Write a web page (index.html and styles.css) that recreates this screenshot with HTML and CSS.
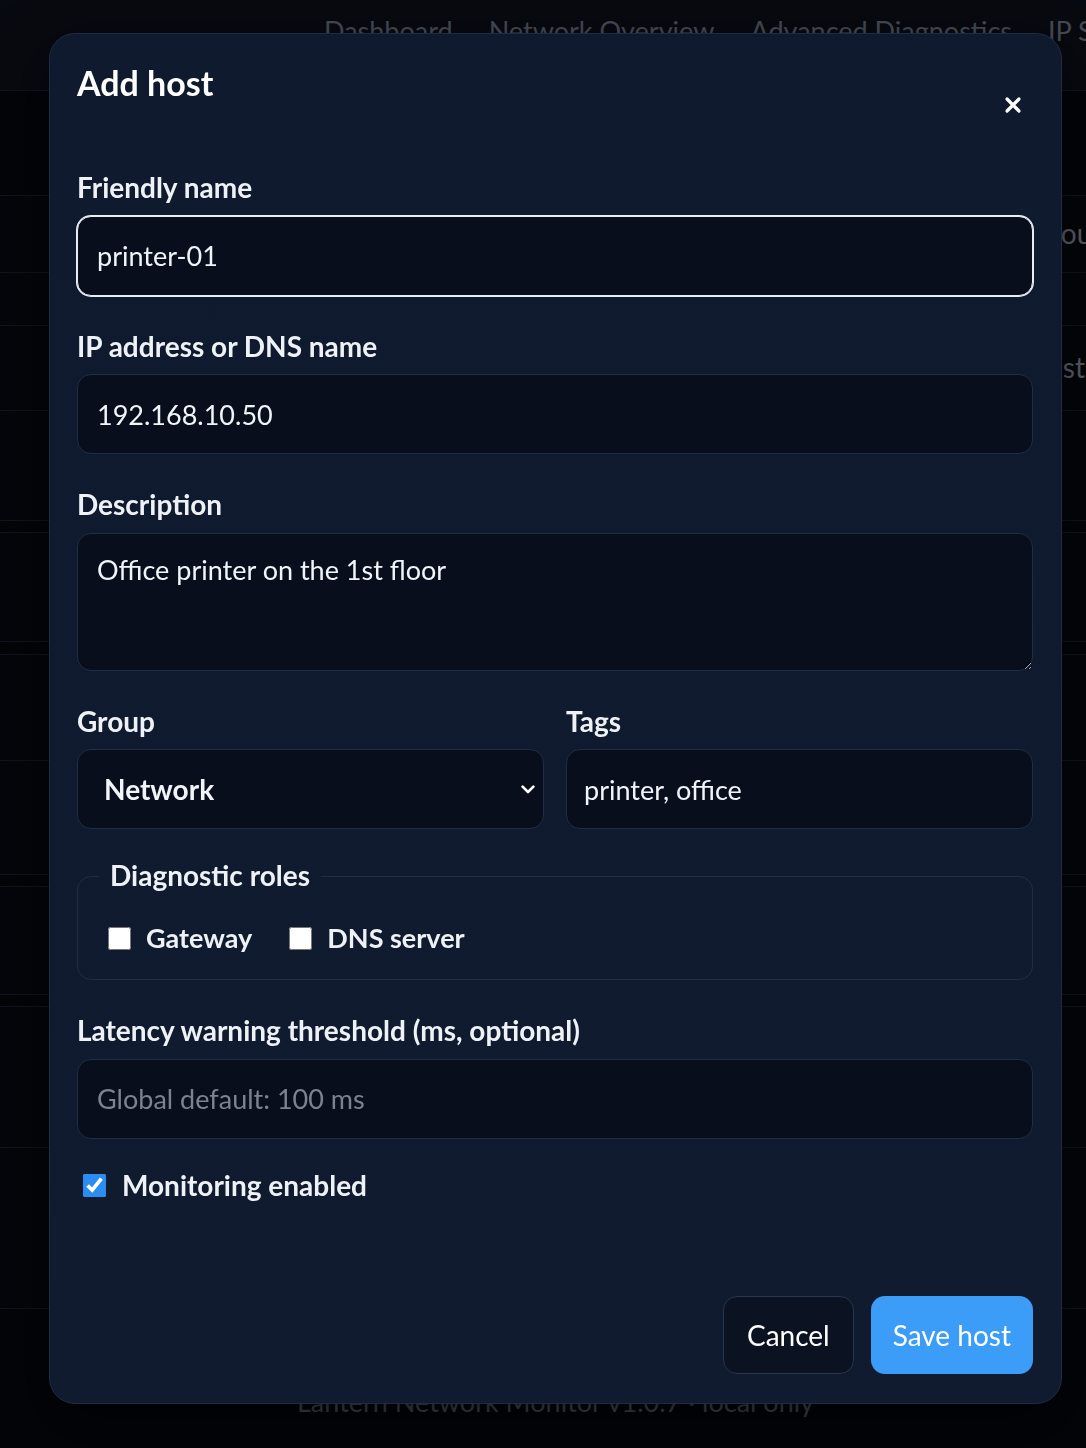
FILE: index.html
```html
<!DOCTYPE html>
<html lang="en">
<head>
<meta charset="utf-8">
<title>Add host</title>
<link rel="stylesheet" href="styles.css">
</head>
<body>
<div class="page">
  <header class="topbar">
    <nav class="nav">
      <a class="nav-link">Dashboard</a>
      <a class="nav-link">Network Overview</a>
      <a class="nav-link">Advanced Diagnostics</a>
      <a class="nav-link">IP Scanner</a>
    </nav>
  </header>
  <main class="bg-main">
    <section class="bg-card">
      <div class="bg-row bg-row--a"><span class="bg-text bg-text--groups">Groups</span></div>
      <div class="bg-row bg-row--b"></div>
      <div class="bg-row bg-row--c"><span class="bg-text bg-text--hosts">Hosts</span></div>
      <div class="bg-row bg-row--d bg-row--last"></div>
    </section>
    <section class="bg-card">
      <div class="bg-row bg-row--e bg-row--last"></div>
    </section>
    <section class="bg-card bg-card--tight">
      <div class="bg-row bg-row--f"></div>
      <div class="bg-row bg-row--g bg-row--last"></div>
    </section>
    <section class="bg-card">
      <div class="bg-row bg-row--h bg-row--last"></div>
    </section>
    <section class="bg-card">
      <div class="bg-row bg-row--i"></div>
      <div class="bg-row bg-row--j bg-row--last"></div>
    </section>
  </main>
  <footer class="bg-foot">Lantern Network Monitor v1.0.7 · local only</footer>
</div>

<div class="backdrop">
  <div class="modal" role="dialog" aria-labelledby="modal-title">
    <div class="modal-head">
      <h2 class="modal-title" id="modal-title">Add host</h2>
      <button class="close-btn" type="button" aria-label="Close">
        <svg class="close-icon" width="18" height="18" viewBox="0 0 18 18" aria-hidden="true">
          <path d="M3 3 L15 15 M15 3 L3 15" fill="none" stroke="#ffffff" stroke-width="3.2" stroke-linecap="round"/>
        </svg>
      </button>
    </div>

    <form class="form">
      <div class="field">
        <label class="label" for="f-name">Friendly name</label>
        <input class="control control--focus" id="f-name" type="text" value="printer-01">
      </div>
      <div class="field">
        <label class="label" for="f-ip">IP address or DNS name</label>
        <input class="control" id="f-ip" type="text" value="192.168.10.50">
      </div>
      <div class="field">
        <label class="label" for="f-desc">Description</label>
        <textarea class="control control--area" id="f-desc">Office printer on the 1st floor</textarea>
      </div>
      <div class="field-row">
        <div class="field">
          <label class="label" for="f-group">Group</label>
          <div class="select-wrap">
            <select class="control control--select" id="f-group">
              <option>Network</option>
              <option>Servers</option>
              <option>Workstations</option>
            </select>
            <svg class="select-chevron" width="14" height="9" viewBox="0 0 14 9" aria-hidden="true">
              <path d="M1.6 1.6 L7 7 L12.4 1.6" fill="none" stroke="#ffffff" stroke-width="2.6" stroke-linecap="round" stroke-linejoin="round"/>
            </svg>
          </div>
        </div>
        <div class="field">
          <label class="label" for="f-tags">Tags</label>
          <input class="control control--tags" id="f-tags" type="text" value="printer, office">
        </div>
      </div>
      <fieldset class="roles">
        <legend class="roles-legend">Diagnostic roles</legend>
        <div class="checks">
          <label class="check"><input class="check-box" type="checkbox"><span>Gateway</span></label>
          <label class="check"><input class="check-box" type="checkbox"><span>DNS server</span></label>
        </div>
      </fieldset>
      <div class="field">
        <label class="label" for="f-lat">Latency warning threshold (ms, optional)</label>
        <input class="control" id="f-lat" type="text" placeholder="Global default: 100 ms">
      </div>
      <label class="check check--main"><input class="check-box" type="checkbox" checked><span>Monitoring enabled</span></label>
    </form>

    <div class="modal-foot">
      <button class="btn btn--ghost" type="button">Cancel</button>
      <button class="btn btn--primary" type="button">Save host</button>
    </div>
  </div>
</div>
</body>
</html>
```

FILE: styles.css
```css
* { box-sizing: border-box; }

html, body {
  margin: 0;
  padding: 0;
  height: 1448px;
  overflow: hidden;
  background: #04060a;
  font-family: "Lato", "Noto Sans", sans-serif;
  color: #eef2f7;
}

/* ---------- background page ---------- */
.page {
  width: 1086px;
  height: 1448px;
  overflow: hidden;
  position: relative;
}

.topbar {
  height: 91px;
  background: #0a0d14;
  border-bottom: 1px solid #161b24;
  padding: 15px 0 0 324px;
}

.nav {
  display: flex;
  gap: 36px;
  white-space: nowrap;
}

.nav-link {
  font-size: 27px;
  line-height: 1.2;
  color: #5e6470;
}

.bg-main {
  padding-top: 104px;
  display: flex;
  flex-direction: column;
  gap: 11px;
}

.bg-card {
  background: #06080d;
  border-top: 1px solid #171c26;
  border-bottom: 1px solid #171c26;
  display: flex;
  flex-direction: column;
}

.bg-card--tight { margin-top: 1px; }

.bg-row {
  border-bottom: 1px solid #171c26;
  display: flex;
  align-items: center;
}

.bg-row--last { border-bottom: none; }
.bg-row--a { height: 77px; }
.bg-row--b { height: 53px; }
.bg-row--c { height: 85px; }
.bg-row--d { height: 109px; }
.bg-row--e { height: 108px; }
.bg-row--f { height: 106px; }
.bg-row--g { height: 113px; }
.bg-row--h { height: 107px; }
.bg-row--i { height: 141px; }
.bg-row--j { height: 160px; }

.bg-text {
  font-size: 28px;
  line-height: 1.2;
  color: #7c828d;
  white-space: nowrap;
}

.bg-text--groups { margin-left: 1031px; }
.bg-text--hosts { margin-left: 1026px; }

.bg-foot {
  position: absolute;
  left: 0;
  width: 1111px;
  top: 1386px;
  text-align: center;
  font-size: 27px;
  line-height: 1.2;
  color: #5a606b;
}

/* ---------- modal ---------- */
.backdrop {
  position: fixed;
  inset: 0;
  background: rgba(2, 4, 8, 0.25);
}

.modal {
  position: absolute;
  left: 49px;
  top: 33px;
  width: 1013px;
  height: 1371px;
  padding: 29px 28px 29px 27px;
  background: linear-gradient(180deg, #0f1a2e 0%, #101b2f 100%);
  border: 1px solid #1e2c45;
  border-radius: 26px;
  box-shadow: 0 20px 60px rgba(0, 0, 0, 0.6);
  display: flex;
  flex-direction: column;
}

.modal-head {
  display: flex;
  justify-content: space-between;
  align-items: flex-start;
  margin-bottom: 50px;
}

.modal-title {
  margin: 0;
  font-size: 34px;
  line-height: 1.2;
  font-weight: 700;
  color: #ffffff;
}

.close-btn {
  margin: 26px 4px 0 0;
  width: 32px;
  height: 32px;
  padding: 0;
  border: none;
  background: transparent;
  display: flex;
  align-items: center;
  justify-content: center;
  cursor: pointer;
}

.form {
  display: flex;
  flex-direction: column;
  gap: 34px;
}

.field {
  display: flex;
  flex-direction: column;
  min-width: 0;
}

.label {
  font-size: 28px;
  line-height: 1.2;
  font-weight: 700;
  color: #eef2f7;
  margin-bottom: 11px;
}

.control {
  width: 100%;
  height: 80px;
  padding: 0 19px;
  font-family: inherit;
  font-size: 27px;
  color: #f1f5f9;
  background: #090e1c;
  border: 1px solid #1f2d46;
  border-radius: 14px;
  outline: none;
}

.control::placeholder { color: #7b8291; }

.control--focus {
  border-color: #e9eef5;
  box-shadow: 0 0 0 1px #e9eef5;
}

.control--area {
  height: 138px;
  padding: 20px 19px;
  line-height: 1.2;
  resize: vertical;
  display: block;
}

.control--tags { padding-left: 17px; }

.field-row {
  display: grid;
  grid-template-columns: 1fr 1fr;
  gap: 22px;
}

.select-wrap { position: relative; }

.control--select {
  appearance: none;
  -webkit-appearance: none;
  padding-left: 26px;
  font-weight: 700;
  font-size: 28px;
}

.select-chevron {
  position: absolute;
  right: 9px;
  top: 50%;
  margin-top: -4px;
  pointer-events: none;
}

.roles {
  margin: -4px 0 0;
  padding: 29px 21px 25px;
  border: 1px solid #1f2d46;
  border-radius: 14px;
  min-width: 0;
}

.roles-legend {
  padding: 0 11px;
  font-size: 28px;
  line-height: 1.2;
  font-weight: 700;
  color: #eef2f7;
}

.checks {
  display: flex;
  gap: 37px;
  padding-left: 9px;
}

.check {
  display: flex;
  align-items: center;
  gap: 15px;
  font-size: 27px;
  line-height: 1.2;
  font-weight: 700;
  color: #eef2f7;
}

.check-box {
  width: 23px;
  height: 23px;
  margin: 0;
  accent-color: #2b8cf2;
}

.check--main {
  margin-top: -4px;
  padding-left: 6px;
  gap: 16px;
  font-size: 28px;
}

.modal-foot {
  margin-top: auto;
  display: flex;
  justify-content: flex-end;
  gap: 17px;
}

.btn {
  height: 78px;
  padding: 0 23px;
  font-family: inherit;
  font-size: 28px;
  border-radius: 14px;
  cursor: pointer;
  color: #ffffff;
}

.btn--ghost {
  background: #0b1222;
  border: 1px solid #27364f;
}

.btn--primary {
  background: #3b9df7;
  border: none;
  padding: 0 22px;
}
```
